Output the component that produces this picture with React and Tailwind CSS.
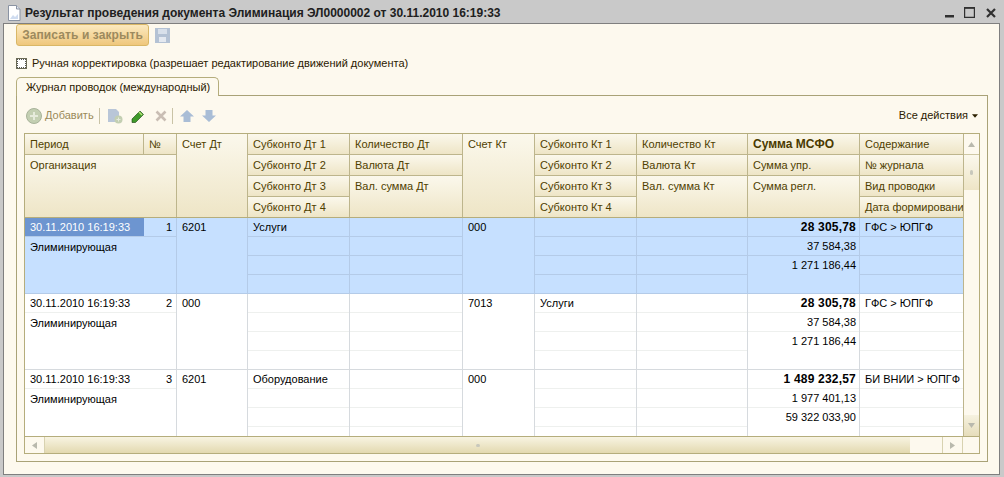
import React from "react";

const F = "font-['Liberation_Sans',sans-serif]";

function H({ children, bold, end }) {
  return (
    <div className={`shrink-0 bg-gradient-to-b from-[#fbf8ec] to-[#eee5c6] pl-[5px] pt-[3px] leading-[15px] whitespace-nowrap overflow-hidden ${end ? "h-[20px]" : "h-[21px] border-b border-[#bdb58c]"} ${bold ? "font-bold text-[12px] text-[#4a3a00]" : ""}`}>
      {children}
    </div>
  );
}

function Fill({ children }) {
  return (
    <div className="flex-1 bg-gradient-to-b from-[#fbf8ec] to-[#eee5c6] pl-[5px] pt-[3px] leading-[15px] whitespace-nowrap">{children}</div>
  );
}

function HCol({ w, items, bold, last }) {
  const head = items.length === 4 ? items.slice(0, 3) : items.slice(0, -1);
  const tail = items[items.length - 1];
  return (
    <div className={`${w} shrink-0 flex flex-col ${last ? "" : "border-r border-[#bdb58c]"}`}>
      {head.map((t, i) => (
        <H key={t} bold={bold && i === 0}>{t}</H>
      ))}
      {items.length === 4 ? <H end>{tail}</H> : <Fill>{tail}</Fill>}
    </div>
  );
}

function Cell({ w, values = [], lines = 3, right, sel, boldFirst, last }) {
  const line = sel ? "border-[#b4cbe8]" : "border-[#eef0ee]";
  const vline = sel ? "border-[#b4cbe8]" : "border-[#d6dade]";
  return (
    <div className={`${w} shrink-0 flex flex-col ${last ? "" : `border-r ${vline}`}`}>
      {[0, 1, 2, 3].map((i) => (
        <div
          key={i}
          className={`h-[19px] shrink-0 pt-[2px] leading-[15px] whitespace-nowrap overflow-hidden text-black ${i < lines ? `border-b ${line}` : ""} ${right ? "text-right pr-[3px]" : "pl-[5px]"} ${boldFirst && i === 0 ? "font-bold text-[12px] tracking-[.2px]" : ""}`}
        >
          {values[i] || ""}
        </div>
      ))}
    </div>
  );
}

function Row({ n, dt, sub, kt, subk, s1, s2, s3, cont, sel, short }) {
  const vline = sel ? "border-[#b4cbe8]" : "border-[#d6dade]";
  const line = sel ? "border-[#b4cbe8]" : "border-[#eef0ee]";
  return (
    <div className={`flex shrink-0 overflow-hidden ${short ? "h-[66px]" : `h-[76px] border-b ${vline}`} ${sel ? "bg-[#c6e0ff]" : "bg-white"}`}>
      <div className={`w-[152px] shrink-0 flex flex-col border-r ${vline}`}>
        <div className={`h-[19px] shrink-0 flex border-b ${line}`}>
          <div className={`w-[119px] shrink-0 pl-[5px] pt-[2px] leading-[15px] ${sel ? "bg-[#6d95d0] text-white" : "text-black"}`}>
            30.11.2010 16:19:33
          </div>
          <div className="flex-1 text-right pr-[4px] pt-[2px] leading-[15px] text-black">{n}</div>
        </div>
        <div className="pl-[5px] pt-[3px] leading-[15px] text-black">Элиминирующая</div>
      </div>
      <Cell w="w-[71px]" values={[dt]} lines={0} sel={sel} />
      <Cell w="w-[102px]" values={[sub]} sel={sel} />
      <Cell w="w-[113px]" lines={3} sel={sel} />
      <Cell w="w-[72px]" values={[kt]} lines={0} sel={sel} />
      <Cell w="w-[102px]" values={[subk]} sel={sel} />
      <Cell w="w-[111px]" lines={3} sel={sel} />
      <Cell w="w-[112px]" values={[s1, s2, s3]} lines={2} right boldFirst sel={sel} />
      <Cell w="w-[103px]" values={[cont]} sel={sel} last />
    </div>
  );
}

function Arrow({ dir, className = "" }) {
  const pts = { up: "1,6 4.5,1 8,6", down: "1,1 4.5,6 8,1", left: "6,1 1,4.5 6,8", right: "1,1 6,4.5 1,8" }[dir];
  const box = dir === "up" || dir === "down" ? "0 0 9 7" : "0 0 7 9";
  const size = dir === "up" || dir === "down" ? "w-[9px] h-[7px]" : "w-[7px] h-[9px]";
  return (
    <svg viewBox={box} className={`${size} ${className}`}>
      <polygon points={pts} fill="#b9b9ad" />
    </svg>
  );
}

export default function App() {
  return (
    <div className={`w-[1004px] h-[477px] bg-[#c9c9c9] flex flex-col overflow-hidden text-[11px] text-[#3f3000] ${F}`}>
      {/* Title */}
      <div className="h-[23px] shrink-0 flex items-center pl-[7px] pr-[8px] pt-[2px] text-black">
        <svg viewBox="0 0 14 16" className="w-[14px] h-[16px] shrink-0">
          <path d="M1.5 .5H9.5L13 4V15.5H1.5Z" fill="#fff" stroke="#8a93a3" />
          <path d="M9.5 .5V4H13" fill="#dfe6f0" stroke="#8a93a3" />
          <path d="M3 14L6 10L8 12L11 9V14Z" fill="#cfdcf0" />
        </svg>
        <span className="ml-[4px] text-[12px] font-bold text-[#202020]">
          Результат проведения документа Элиминация ЭЛ0000002 от 30.11.2010 16:19:33
        </span>
        <div className="ml-auto flex items-center gap-[10px]">
          <svg viewBox="0 0 9 11" className="w-[9px] h-[11px]"><rect x="0" y="8" width="9" height="2.5" fill="#303030" /></svg>
          <svg viewBox="0 0 11 11" className="w-[11px] h-[11px]"><path d="M.6 .6H10.4V10.4H.6Z" fill="none" stroke="#303030" strokeWidth="1.2" /><rect x="0" y="0" width="11" height="1.8" fill="#303030" /></svg>
          <svg viewBox="0 0 10 10" className="w-[10px] h-[10px] ml-[1px]"><path d="M1 1L9 9M9 1L1 9" stroke="#303030" strokeWidth="2.2" /></svg>
        </div>
      </div>

      {/* Body */}
      <div className="flex-1 ml-[3px] mb-[2px] mr-[4px] min-h-0 border border-[#7f7f7f] bg-[#fdf9ee] flex flex-col pl-[12px] pr-[11px] pb-[12px]">
        <div className="flex items-center h-[22px] shrink-0">
          <button className="h-[22px] w-[133px] rounded-[3px] border border-[#d9b766] bg-gradient-to-b from-[#fbe9bf] to-[#efc77c] text-[12px] font-bold tracking-[.1px] text-[#9c8a5e]">
            Записать и закрыть
          </button>
          <svg viewBox="0 0 15 15" className="w-[15px] h-[15px] ml-[6px]">
            <rect x="0" y="0" width="15" height="15" fill="#b4c2d4" />
            <rect x="3" y="1" width="9" height="5" fill="#d8e0ea" />
            <rect x="4" y="9" width="7" height="5" fill="#e4e9f0" />
          </svg>
        </div>
        <div className="flex items-center h-[15px] mt-[10px] shrink-0 text-[#2b2000]">
          <span className="w-[11px] h-[11px] shrink-0 border border-[#6b6b55] bg-white outline-1 outline-dotted outline-[#555] -outline-offset-2" />
          <span className="ml-[5px]">Ручная корректировка (разрешает редактирование движений документа)</span>
        </div>

        {/* Tabs */}
        <div className="flex mt-[6px] h-[18px] shrink-0">
          <div className="w-[203px] rounded-t-[5px] border border-b-0 border-[#b5ad7c] bg-[#fdf9ee] pl-[9px] pt-[2px] leading-[15px] text-[#2b2000] relative z-10 h-[19px]">
            Журнал проводок (международный)
          </div>
        </div>
        <div className="flex-1 border border-[#a9a277] flex flex-col pl-[7px] pr-[7px] pt-[10px] pb-[7px] min-h-0">
          {/* Toolbar */}
          <div className="h-[19px] shrink-0 flex items-center">
            <svg viewBox="0 0 16 16" className="w-[16px] h-[16px] ml-[2px]">
              <circle cx="8" cy="8" r="7.5" fill="#c3cfb2" stroke="#a8b39a" />
              <path d="M8 4V12M4 8H12" stroke="#e6ebdc" strokeWidth="2" />
            </svg>
            <span className="ml-[3px] text-[#9a8a5a]">Добавить</span>
            <span className="ml-[5px] w-px h-[16px] bg-[#c9c3a6]" />
            <svg viewBox="0 0 16 16" className="w-[16px] h-[16px] ml-[7px]">
              <path d="M1 1H9L12 4V14H1Z" fill="#b9c6d8" />
              <circle cx="11.5" cy="11.5" r="4" fill="#c3cfb2" />
              <path d="M11.5 9.5V13.5M9.5 11.5H13.5" stroke="#e6ebdc" />
            </svg>
            <svg viewBox="0 0 14 14" className="w-[14px] h-[14px] ml-[8px]">
              <path d="M1 10L9 2L12.5 5.5L4.5 13.5L1 13.5Z" fill="#3f9a2a" stroke="#17400f" strokeWidth=".6" />
              <path d="M8 3L11 6" stroke="#b7e67a" strokeWidth="1.4" />
            </svg>
            <svg viewBox="0 0 12 12" className="w-[12px] h-[12px] ml-[10px]">
              <path d="M1.5 1.5L10.5 10.5M10.5 1.5L1.5 10.5" stroke="#c9beb4" strokeWidth="2.6" />
            </svg>
            <span className="ml-[5px] w-px h-[16px] bg-[#c9c3a6]" />
            <svg viewBox="0 0 14 12" className="w-[14px] h-[12px] ml-[7px]"><path d="M7 0L14 6.5H10.5V12H3.5V6.5H0Z" fill="#a9bdd6" /></svg>
            <svg viewBox="0 0 14 12" className="w-[14px] h-[12px] ml-[8px]"><path d="M7 12L14 5.5H10.5V0H3.5V5.5H0Z" fill="#a9bdd6" /></svg>
            <span className="ml-auto text-[#2b2000]">Все действия</span>
            <svg viewBox="0 0 7 4" className="w-[6px] h-[4px] ml-[4px] mr-[2px]"><polygon points="0,0 7,0 3.5,4" fill="#2b2000" /></svg>
          </div>

          {/* Table */}
          <div className="flex-1 mt-[8px] border border-[#b5ad7c] flex flex-col min-h-0">
            <div className="flex-1 flex min-h-0">
              <div className="w-[938px] shrink-0 flex flex-col">
                {/* Header */}
                <div className="flex h-[84px] shrink-0 text-[#4f4000] border-b border-[#b5ad7c]">
                  <div className="w-[152px] shrink-0 flex flex-col border-r border-[#bdb58c]">
                    <div className="flex">
                      <div className="w-[119px] border-r border-[#bdb58c]"><H>Период</H></div>
                      <div className="flex-1"><H>№</H></div>
                    </div>
                    <Fill>Организация</Fill>
                  </div>
                  <HCol w="w-[71px]" items={["Счет Дт"]} />
                  <HCol w="w-[102px]" items={["Субконто Дт 1", "Субконто Дт 2", "Субконто Дт 3", "Субконто Дт 4"]} />
                  <HCol w="w-[113px]" items={["Количество Дт", "Валюта Дт", "Вал. сумма Дт"]} />
                  <HCol w="w-[72px]" items={["Счет Кт"]} />
                  <HCol w="w-[102px]" items={["Субконто Кт 1", "Субконто Кт 2", "Субконто Кт 3", "Субконто Кт 4"]} />
                  <HCol w="w-[111px]" items={["Количество Кт", "Валюта Кт", "Вал. сумма Кт"]} />
                  <HCol w="w-[112px]" items={["Сумма МСФО", "Сумма упр.", "Сумма регл."]} bold />
                  <HCol w="w-[103px]" items={["Содержание", "№ журнала", "Вид проводки", "Дата формирования"]} last />
                </div>
                {/* Rows */}
                <Row sel n="1" dt="6201" sub="Услуги" kt="000" s1="28 305,78" s2="37 584,38" s3="1 271 186,44" cont="ГФС > ЮПГФ" />
                <Row n="2" dt="000" kt="7013" subk="Услуги" s1="28 305,78" s2="37 584,38" s3="1 271 186,44" cont="ГФС > ЮПГФ" />
                <Row short n="3" dt="6201" sub="Оборудование" kt="000" s1="1 489 232,57" s2="1 977 401,13" s3="59 322 033,90" cont="БИ ВНИИ > ЮПГФ" />
              </div>
              {/* Vertical scrollbar */}
              <div className="flex-1 flex flex-col border-l border-[#bdb58c] bg-[#fdf9ee]">
                <div className="h-[21px] shrink-0 flex items-center justify-center border-b border-[#cfc8a4]"><Arrow dir="up" /></div>
                <div className="h-[35px] shrink-0 flex items-center justify-center bg-gradient-to-b from-[#fbf8ec] to-[#eee5c6]">
                  <span className="w-[3px] h-[5px] rounded-full bg-[#c8c8bc]" />
                </div>
                <div className="flex-1" />
                <div className="h-[21px] shrink-0 flex items-center justify-center bg-gradient-to-b from-[#f6f2e0] to-[#e6ddbb]"><Arrow dir="down" /></div>
              </div>
            </div>
            {/* Horizontal scrollbar */}
            <div className="h-[17px] shrink-0 flex border-t border-[#b5ad7c] bg-[#fdf9ee]">
              <div className="w-[20px] shrink-0 flex items-center justify-center border-r border-[#d8d2b0]"><Arrow dir="left" /></div>
              <div className="w-[865px] shrink-0 flex items-center justify-center bg-gradient-to-b from-[#f8f4e2] to-[#e3d9b0]">
                <span className="w-[4px] h-[3px] rounded-full bg-[#c8c8bc]" />
              </div>
              <div className="w-[32px] shrink-0" />
              <div className="w-[21px] shrink-0 flex items-center justify-center border-x border-[#d8d2b0]"><Arrow dir="right" /></div>
              <div className="flex-1" />
            </div>
          </div>
        </div>
      </div>
    </div>
  );
}
